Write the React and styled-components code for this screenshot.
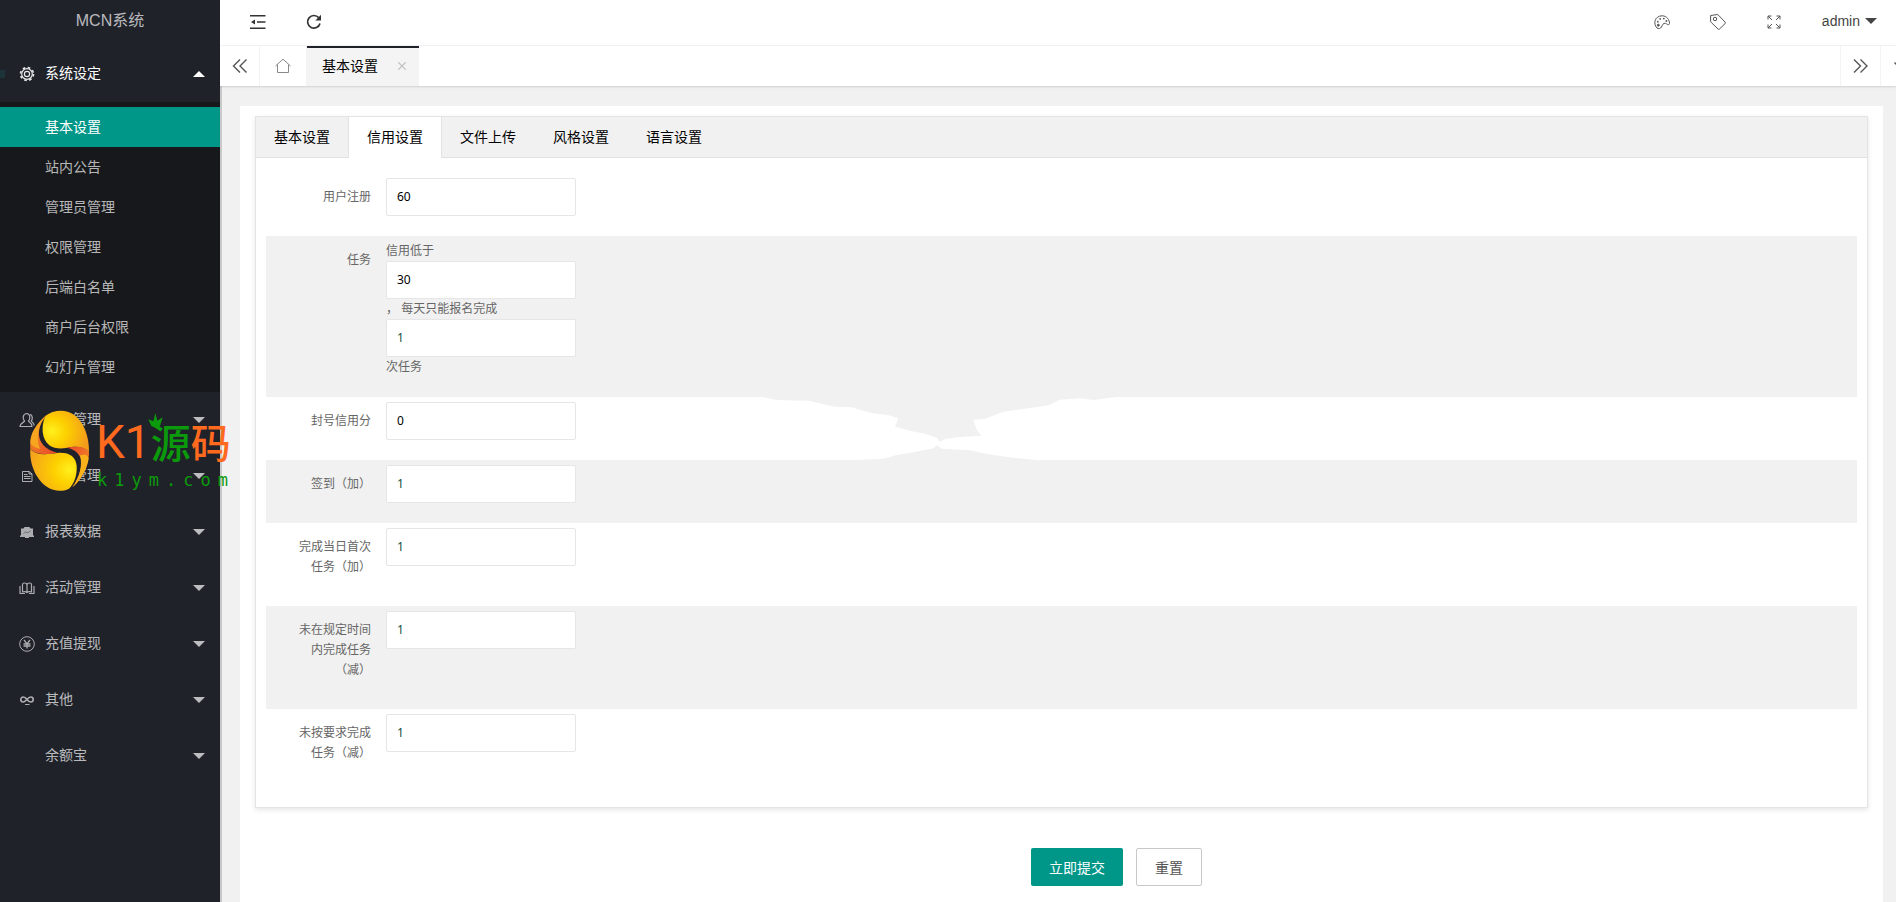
import React, { useState } from "react";
import styled, { createGlobalStyle } from "styled-components";

const GlobalStyle = createGlobalStyle`
  * { box-sizing: border-box; }
  body {
    margin: 0;
    background: #f1f1f1;
    color: #333;
    font: 14px/20px "Liberation Sans", "Noto Sans CJK SC", sans-serif;
  }
  button, input { font-family: inherit; }
  button { cursor: pointer; }
  a { color: inherit; text-decoration: none; }
`;

/* ---------- shell ---------- */

const Shell = styled.div`
  position: relative;
  display: flex;
  min-height: 100vh;
`;

const Sidebar = styled.aside`
  flex: 0 0 220px;
  background: #20222a;
  color: rgba(255, 255, 255, 0.7);
`;

const Brand = styled.h1`
  margin: 0;
  height: 46px;
  padding: 8px 0;
  text-align: center;
  font-size: 16px;
  font-weight: 400;
  line-height: 26px;
`;

const Main = styled.div`
  flex: 1;
  min-width: 0;
  display: flex;
  flex-direction: column;
`;

/* ---------- side menu ---------- */

const MenuGroup = styled.button`
  position: relative;
  display: flex;
  align-items: center;
  width: 100%;
  height: 56px;
  padding: 0 15px 0 19px;
  border: 0;
  background: none;
  color: ${(p) => (p.$open ? "#fff" : "rgba(255, 255, 255, 0.7)")};
  font-size: 14px;
  line-height: 20px;
  text-align: left;
`;

const MenuIcon = styled.span`
  display: flex;
  width: 16px;
  height: 16px;
  margin-right: 10px;
  opacity: 0.9;
`;

const MenuText = styled.span`
  flex: 1;
  padding-bottom: 2px;
`;

const Caret = styled.span`
  width: 0;
  height: 0;
  border: 6px solid transparent;
  ${(p) =>
    p.$up
      ? "border-bottom-color: currentColor; border-top-width: 0;"
      : "border-top-color: currentColor; border-bottom-width: 0;"}
`;

const ActiveMark = styled.span`
  position: absolute;
  left: 0;
  top: 24px;
  width: 5px;
  height: 8px;
  background: #1c3439;
`;

const SubMenu = styled.div`
  padding: 5px 0;
  background: #17181b;
`;

const SubItem = styled.a`
  display: block;
  height: 40px;
  padding-left: 45px;
  line-height: 40px;
  color: ${(p) => (p.$active ? "#fff" : "inherit")};
  background: ${(p) => (p.$active ? "#009688" : "none")};
`;

/* ---------- header ---------- */

const TopBar = styled.header`
  display: flex;
  justify-content: space-between;
  height: 46px;
  padding: 0 19px 10px 30px;
  border-bottom: 1px solid #f3f3f3;
  background: #fff;
`;

const BarSide = styled.div`
  display: flex;
  align-items: flex-start;
  gap: 40px;
`;

const IconButton = styled.button`
  display: flex;
  padding: 14px 0 0;
  border: 0;
  background: none;
  color: ${(p) => (p.$dark ? "#333" : "#555")};
`;

const UserButton = styled.button`
  display: flex;
  align-items: center;
  gap: 5px;
  padding: 11px 0 0;
  border: 0;
  background: none;
  color: #444;
  font-size: 14px;
  line-height: 20px;
`;

const TabsWrap = styled.div`
  position: relative;
  box-shadow: 0 1px 2px rgba(0, 0, 0, 0.14);
`;

const PageTabs = styled.nav`
  display: flex;
  height: 40px;
  overflow: hidden;
  background: #fff;
`;

const StripButton = styled.button`
  flex: 0 0 ${(p) => p.$w || 40}px;
  display: flex;
  align-items: center;
  justify-content: center;
  padding: 0;
  border: 0;
  border-${(p) => p.$edge}: 1px solid #f3f3f3;
  background: none;
  color: ${(p) => (p.$soft ? "#888" : "#555")};
`;

const PageTab = styled.div`
  display: flex;
  align-items: center;
  gap: 19px;
  padding: 0 12px 2px 15px;
  border-top: 2px solid #20222a;
  background: #f4f4f4;
  color: #000;
`;

const CloseTab = styled.button`
  display: flex;
  padding: 0;
  border: 0;
  background: none;
  color: #c2c2c2;
`;

const Spacer = styled.div`
  flex: 1;
`;

const StripEnd = styled.div`
  flex: 0 0 56px;
  display: flex;
  overflow: hidden;
`;

/* ---------- page body ---------- */

const Body = styled.main`
  flex: 1;
  display: flex;
  padding: 20px 13px 0 18px;
  border-left: 2px solid #c9c9c9;
`;

const Card = styled.form`
  flex: 1;
  min-width: 0;
  padding: 10px 15px 16px;
  background: #fff;
`;

const Panel = styled.section`
  border: 1px solid #e4e4e4;
  box-shadow: 0 2px 5px rgba(0, 0, 0, 0.1);
`;

const TabHead = styled.div`
  display: flex;
  height: 41px;
  background: #f1f1f1;
  box-shadow: inset 0 -1px 0 #e2e2e2;
`;

const TabButton = styled.button`
  height: 41px;
  padding: 0 18px 2px;
  border: 0;
  border-right: 1px solid ${(p) => (p.$edge ? "#e2e2e2" : "transparent")};
  background: ${(p) => (p.$active ? "#fff" : "none")};
  background-clip: padding-box;
  color: #000;
  font-size: 14px;
  line-height: 20px;
`;

const Rows = styled.div`
  padding: 15px 10px;
`;

const Row = styled.div`
  position: relative;
  display: flex;
  align-items: flex-start;
  padding: 5px 0 20px 10px;
  background: ${(p) => (p.$shaded ? "#f1f1f1" : "#fff")};
  color: #666;
  font-size: 12px;
`;

const RowLabel = styled.label`
  flex: 0 0 110px;
  padding: 9px 15px;
  text-align: right;
`;

const Fields = styled.div`
  display: flex;
  flex-direction: column;
  align-items: flex-start;
`;

const TextInput = styled.input`
  width: 190px;
  height: 38px;
  padding: 0 10px 2px;
  border: 1px solid #e6e6e6;
  border-radius: 2px;
  background: #fff;
  color: ${(p) => (p.value === "1" ? "#14503f" : "#000")};
  font: 12px/18px "Noto Sans", "Noto Sans CJK SC", sans-serif;
  outline: none;
`;

const Smudge = styled.svg`
  position: absolute;
  left: 474px;
  top: 0;
`;

const Actions = styled.div`
  display: flex;
  justify-content: center;
  gap: 13px;
  padding: 40px 0 0 110px;
`;

const ActionButton = styled.button`
  height: 38px;
  padding: 0 18px 1px;
  border: ${(p) => (p.$primary ? "0" : "1px solid #c9c9c9")};
  border-radius: 2px;
  background: ${(p) => (p.$primary ? "#009688" : "#fff")};
  color: ${(p) => (p.$primary ? "#fff" : "#555")};
  font-size: 14px;
`;

const Watermark = styled.svg`
  position: absolute;
  left: 0;
  top: 380px;
  z-index: 5;
  pointer-events: none;
`;

/* ---------- icons ---------- */

const Icon = ({ size = 16, w = 1, children }) => (
  <svg width={size} height={size} viewBox="0 0 16 16" fill="none" stroke="currentColor" strokeWidth={w}>
    {children}
  </svg>
);

const GearIcon = () => (
  <Icon>
    <circle cx="8" cy="8" r="6.5" strokeWidth="1.6" strokeDasharray="2.6 2.5" />
    <circle cx="8" cy="8" r="5.3" strokeWidth="1.2" />
    <circle cx="8" cy="8" r="2.6" strokeWidth="1.2" />
  </Icon>
);
const UsersIcon = () => (
  <Icon w="1.2">
    <path d="M5.5 9C3.6 7.4 3.4 2 7.5 1.5C11.8 1.8 11.3 7.4 9.500 9C10 10.5 13 10.5 13 14.5H1C1 10.8 5 10.8 5.500 9Z" />
    <path d="M11 2.3C14 3 13.6 7.6 12.3 8.8C12.6 10.2 15 10.5 15.2 13.5" />
  </Icon>
);
const DocIcon = () => (
  <Icon>
    <path d="M3.500 3.500H10L13 6V13.500H3.500ZM10 3.500V6H13M5 6.500H8.500M5 8.500H11.500M5 10.500H11.500" />
  </Icon>
);
const BoardIcon = () => (
  <Icon>
    <path d="M2 4.500H4.500L5.500 3H10.500L11.500 4.500H14V11.500H15V13H10V14H6V13H1V11.500H2Z" fill="currentColor" stroke="none" />
    <path d="M4.500 9.500L6.500 8L8.500 8.800L11.500 7" stroke="#55565c" strokeWidth=".7" />
  </Icon>
);
const BookIcon = () => (
  <Icon w="1.2">
    <path d="M3.500 12V4.500Q3.500 3 5.500 3Q8 3 8 5Q8 3 10.500 3Q12.500 3 12.500 4.500V12Q9.500 11 8 12.500Q6.500 11 3.500 12ZM8 5V12M1 6V13.500H6M15 6V13.500H10" />
  </Icon>
);
const YenIcon = () => (
  <Icon>
    <circle cx="8" cy="8" r="7.300" />
    <path d="M5 4L8 7.800L11 4M8 7.800V12.500M4.500 8H11.500M4.500 10H11.500" strokeWidth="1.300" />
  </Icon>
);
const InfinityIcon = () => (
  <Icon w="1.600">
    <path d="M8 7.500C6.500 5.500 5.500 5 4.300 5C2.800 5 1.800 6.200 1.800 7.500S2.800 10 4.300 10C6.500 10 9 5 11.700 5C13.200 5 14.200 6.200 14.200 7.500S13.200 10 11.700 10C10.500 10 9.500 9.500 8 7.500" />
    <path d="M6 12.500H10.500" strokeWidth="1" />
  </Icon>
);
const FoldIcon = () => (
  <Icon w="1.500">
    <path d="M0 1.700H15.500M7 8H15.500M0 14.300H15.500" />
    <path d="M1 8L5 5.500V10.500Z" fill="currentColor" stroke="none" />
  </Icon>
);
const RefreshIcon = () => (
  <Icon w="1.700">
    <path d="M12.800 3.800A6.300 6.300 0 1 0 14 9.500" />
    <path d="M15 .8V6.500H9.300Z" fill="currentColor" stroke="none" />
  </Icon>
);
const PaletteIcon = () => (
  <Icon>
    <path d="M3 14C-1 10 .5 2 8 1.800C13 1.800 15.500 6 15.500 9.500C15 12 13 10 11.500 9.300C9 8.800 8.500 11 7.500 13C6.500 14.800 4.500 15 3 14Z" />
    <circle cx="4.300" cy="11.200" r="1" fill="currentColor" />
    <g fill="currentColor" stroke="none">
      <circle cx="3.800" cy="7.700" r=".9" />
      <circle cx="6.200" cy="4.900" r=".9" />
      <circle cx="9.800" cy="4.600" r=".9" />
      <circle cx="12.400" cy="7" r=".9" />
    </g>
  </Icon>
);
const TagIcon = () => (
  <Icon>
    <path d="M.6 1.500L7 .6Q8 .6 8.600 1.300L15 8Q15.800 9 15 9.700L9.500 15Q8.700 15.700 8 15L1.300 8.500Q.6 7.900 .6 7Z" />
    <circle cx="5" cy="5" r="1.700" />
  </Icon>
);
const FullIcon = () => (
  <Icon>
    <path d="M2 5.500V2H5.500M2 2L6 6M10.500 2H14V5.500M14 2L10 6M2 10.500V14H5.500M2 14L6 10M10.500 14H14V10.500M14 14L10 10" />
  </Icon>
);
const HomeIcon = () => (
  <Icon>
    <path d="M.5 8L8 1.200L15.500 8M2.500 6.500V14.500H13.500V6.500" />
  </Icon>
);
const LeftIcon = () => (
  <Icon w="1.400">
    <path d="M8 1.500L1.500 8L8 14.500M14.500 1.500L8 8L14.500 14.500" />
  </Icon>
);
const RightIcon = () => (
  <Icon w="1.400">
    <path d="M1 1.500L7.500 8L1 14.500M7.500 1.500L14 8L7.500 14.500" />
  </Icon>
);
const DownIcon = () => (
  <Icon w="1.400">
    <path d="M1.500 4.500L8 11L14.500 4.500" />
  </Icon>
);
const CloseIcon = () => (
  <Icon size={10} w="1.700">
    <path d="M2 2L14 14M14 2L2 14" />
  </Icon>
);

/* ---------- data ---------- */

const subItems = ["基本设置", "站内公告", "管理员管理", "权限管理", "后端白名单", "商户后台权限", "幻灯片管理"];

const groups = [
  ["会员管理", UsersIcon],
  ["任务管理", DocIcon],
  ["报表数据", BoardIcon],
  ["活动管理", BookIcon],
  ["充值提现", YenIcon],
  ["其他", InfinityIcon],
  ["余额宝", null],
];

const settingTabs = ["基本设置", "信用设置", "文件上传", "风格设置", "语言设置"];

const initial = { reg: "60", below: "30", times: "1", ban: "0", sign: "1", first: "1", late: "1", bad: "1" };

const SiteMark = () => (
  <Watermark width="240" height="130" role="img" aria-label="K1源码">
    <defs>
      <radialGradient id="up" cx=".2" cy=".5" r=".8">
        <stop offset="0" stopColor="#fff01c" />
        <stop offset=".4" stopColor="#fdd000" />
        <stop offset="1" stopColor="#f29a1c" />
      </radialGradient>
      <radialGradient id="low" cx=".85" cy=".5" r=".85">
        <stop offset="0" stopColor="#fff01c" />
        <stop offset=".4" stopColor="#fdd000" />
        <stop offset="1" stopColor="#f5a51c" />
      </radialGradient>
      <linearGradient id="redL" x1="0" y1="0" x2="1" y2="1">
        <stop offset="0" stopColor="#f6a021" />
        <stop offset="1" stopColor="#e8442c" />
      </linearGradient>
      <linearGradient id="redR" x1="0" y1="0" x2="1" y2="1">
        <stop offset="0" stopColor="#e8442c" />
        <stop offset="1" stopColor="#f6a021" />
      </linearGradient>
    </defs>
    <g transform="scale(.3333)">
      <ellipse cx="179" cy="213" rx="84" ry="112" fill="#20222a" />
      <path d="M136 108C160 90 195 86 222 104C252 125 268 170 267 216C255 204 238 199 215 201C190 207 165 208 148 196C126 177 122 142 136 108Z" fill="url(#up)" />
      <path d="M200 203C235 196 258 202 267 216C268 245 248 300 217 322C240 290 250 252 241 232C233 215 220 207 200 203Z" fill="url(#redR)" />
      <path d="M240 226C256 222 264 224 266 236C261 268 244 298 217 322C240 290 248 254 240 226Z" fill="#f9b21c" />
      <path d="M143 103C107 130 88 170 91 206C107 225 140 224 172 218C134 210 111 182 118 148C122 128 132 112 143 103Z" fill="url(#redL)" />
      <path d="M143 103C107 130 90 165 91 188C98 200 109 205 120 206C106 175 115 130 143 103Z" fill="#f7a51f" />
      <path d="M91 206C107 227 140 224 172 219C208 216 227 230 230 257C232 288 221 313 207 326C174 342 134 328 111 289C96 263 89 235 91 206Z" fill="url(#low)" />
      <path d="M466 99L472 122L488 112L480 138Q466 145 454 138L445 118L460 124Z" fill="#0b9a0b" />
    </g>
    <text x="96" y="78" fill="#ff6a1f" fontFamily="Roboto, 'Noto Sans CJK SC', sans-serif" fontSize="46">
      K1<tspan fontSize="40" fontWeight="500" fill="#0b9a0b">源</tspan><tspan fontSize="40" fontWeight="500">码</tspan>
    </text>
    <text x="97" y="106" fill="#0b9a0b" fontFamily="DejaVu Sans Mono, monospace" fontSize="17" letterSpacing="7">k1ym.com</text>
  </Watermark>
);

export default function App() {
  const [values, setValues] = useState(initial);
  const [tab, setTab] = useState(1);

  const field = (name) => (
    <TextInput
      id={name}
      type="text"
      value={values[name]}
      onChange={(e) => setValues({ ...values, [name]: e.target.value })}
    />
  );

  return (
    <Shell>
      <GlobalStyle />
      <Sidebar>
        <Brand>MCN系统</Brand>
        <nav>
          <MenuGroup type="button" $open>
            <ActiveMark />
            <MenuIcon><GearIcon /></MenuIcon>
            <MenuText>系统设定</MenuText>
            <Caret $up />
          </MenuGroup>
          <SubMenu>
            {subItems.map((t, i) => (
              <SubItem key={t} href="#" $active={i === 0}>{t}</SubItem>
            ))}
          </SubMenu>
          {groups.map(([t, G]) => (
            <MenuGroup key={t} type="button">
              <MenuIcon>{G && <G />}</MenuIcon>
              <MenuText>{t}</MenuText>
              <Caret />
            </MenuGroup>
          ))}
        </nav>
      </Sidebar>

      <Main>
        <TopBar>
          <BarSide>
            <IconButton type="button" aria-label="侧边伸缩" $dark><FoldIcon /></IconButton>
            <IconButton type="button" aria-label="刷新" $dark><RefreshIcon /></IconButton>
          </BarSide>
          <BarSide>
            <IconButton type="button" aria-label="主题"><PaletteIcon /></IconButton>
            <IconButton type="button" aria-label="便签"><TagIcon /></IconButton>
            <IconButton type="button" aria-label="全屏"><FullIcon /></IconButton>
            <UserButton type="button">admin<Caret /></UserButton>
          </BarSide>
        </TopBar>
        <TabsWrap>
          <PageTabs>
            <StripButton type="button" aria-label="向左" $edge="right"><LeftIcon /></StripButton>
            <StripButton type="button" aria-label="主页" $edge="right" $w={47} $soft><HomeIcon /></StripButton>
            <PageTab>
              基本设置
              <CloseTab type="button" aria-label="关闭"><CloseIcon /></CloseTab>
            </PageTab>
            <Spacer />
            <StripEnd>
              <StripButton type="button" aria-label="向右" $edge="left"><RightIcon /></StripButton>
              <StripButton type="button" aria-label="更多" $edge="left"><DownIcon /></StripButton>
            </StripEnd>
          </PageTabs>
        </TabsWrap>

        <Body>
          <Card onSubmit={(e) => e.preventDefault()} onReset={() => setValues(initial)}>
            <Panel>
              <TabHead role="tablist">
                {settingTabs.map((t, i) => (
                  <TabButton
                    key={t}
                    type="button"
                    role="tab"
                    aria-selected={i === tab}
                    $active={i === tab}
                    $edge={i === tab || i === tab - 1}
                    onClick={() => setTab(i)}
                  >
                    {t}
                  </TabButton>
                ))}
              </TabHead>
              <Rows>
                <Row>
                  <RowLabel htmlFor="reg">用户注册</RowLabel>
                  {field("reg")}
                </Row>
                <Row $shaded>
                  <RowLabel htmlFor="below">任务</RowLabel>
                  <Fields>
                    <label htmlFor="below">信用低于</label>
                    {field("below")}
                    <label htmlFor="times">， 每天只能报名完成</label>
                    {field("times")}
                    <span>次任务</span>
                  </Fields>
                </Row>
                <Row>
                  <RowLabel htmlFor="ban">封号信用分</RowLabel>
                  {field("ban")}
                  <Smudge width="420" height="63" viewBox="0 51 1260 189" fill="#f1f1f1" aria-hidden="true">
                    <path d="M66 51L110 60L205 62L285 80L335 82L390 98L445 106L475 114L465 140L510 152L555 161L592 174L598 186L615 178L650 172L724 167L710 150L700 120L735 116L790 95L850 87L925 76L960 59L1020 55L1060 60L1130 51Z" />
                    <path d="M350 240L430 236L470 225L520 217L580 205L591 195L605 206L690 211L740 222L820 233L890 240Z" />
                  </Smudge>
                </Row>
                <Row $shaded>
                  <RowLabel htmlFor="sign">签到（加）</RowLabel>
                  {field("sign")}
                </Row>
                <Row>
                  <RowLabel htmlFor="first">完成当日首次任务（加）</RowLabel>
                  {field("first")}
                </Row>
                <Row $shaded>
                  <RowLabel htmlFor="late">未在规定时间内完成任务（减）</RowLabel>
                  {field("late")}
                </Row>
                <Row>
                  <RowLabel htmlFor="bad">未按要求完成任务（减）</RowLabel>
                  {field("bad")}
                </Row>
              </Rows>
            </Panel>
            <Actions>
              <ActionButton type="submit" $primary>立即提交</ActionButton>
              <ActionButton type="reset">重置</ActionButton>
            </Actions>
          </Card>
        </Body>
      </Main>
      <SiteMark />
    </Shell>
  );
}
